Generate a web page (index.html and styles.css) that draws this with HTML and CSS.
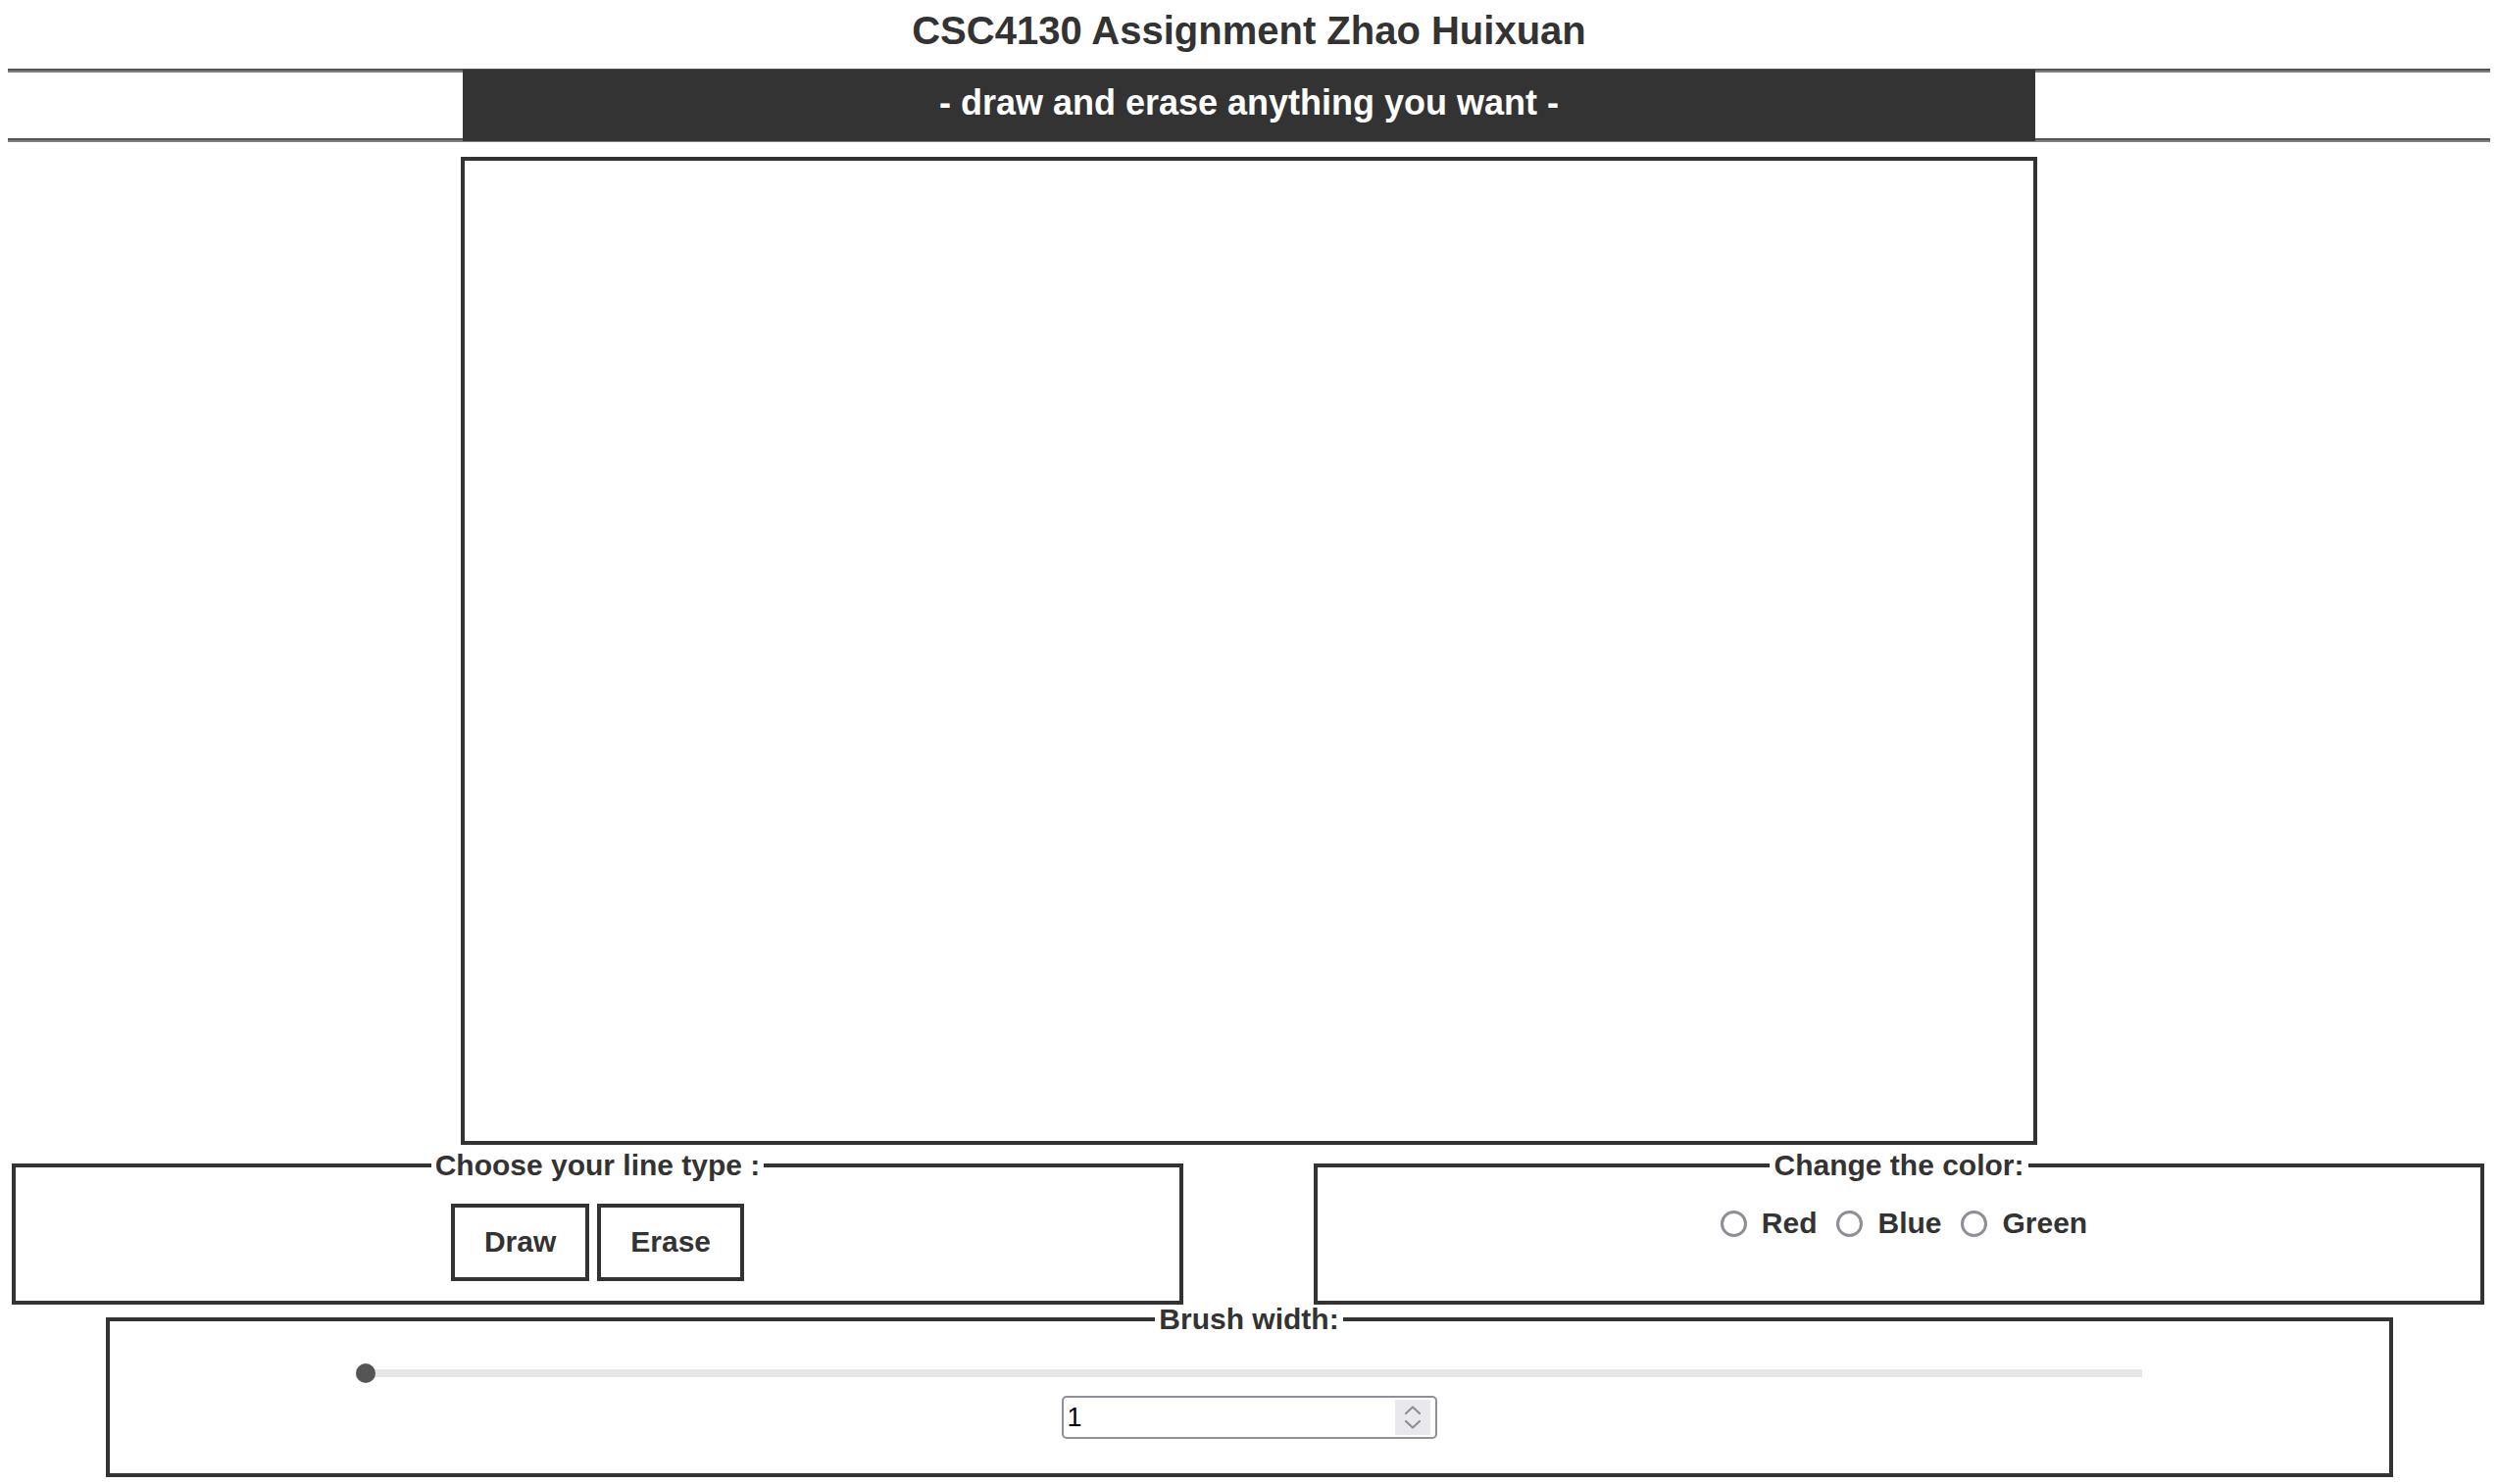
FILE: index.html
```html
<!DOCTYPE html>
<html lang="en">
<head>
<meta charset="utf-8">
<title>CSC4130 Assignment</title>
<link rel="stylesheet" href="styles.css">
</head>
<body>
<h1 class="title">CSC4130 Assignment Zhao Huixuan</h1>
<div class="band">
  <h2 class="banner">- draw and erase anything you want -</h2>
</div>
<canvas class="board" width="800" height="500"></canvas>
<div class="tools">
  <fieldset class="group group-left">
    <legend class="legend">Choose your line type :</legend>
    <div class="buttons">
      <button class="btn" type="button">Draw</button>
      <button class="btn" type="button">Erase</button>
    </div>
  </fieldset>
  <fieldset class="group group-right">
    <legend class="legend">Change the color:</legend>
    <div class="colors">
      <label class="opt"><input class="radio" type="radio" name="color" value="red">Red</label>
      <label class="opt"><input class="radio" type="radio" name="color" value="blue">Blue</label>
      <label class="opt"><input class="radio" type="radio" name="color" value="green">Green</label>
    </div>
  </fieldset>
</div>
<fieldset class="group brush">
  <legend class="legend">Brush width:</legend>
  <input class="range" type="range" min="1" max="50" value="1">
  <div class="numbox">
    <input class="num" type="text" value="1">
    <span class="spin">
      <svg width="36" height="36" viewBox="0 0 36 36" aria-hidden="true">
        <polyline points="11,14 18,7.5 25,14" fill="none" stroke="#8e8e98" stroke-width="2.2" stroke-linecap="round" stroke-linejoin="round"/>
        <polyline points="11,22 18,28.5 25,22" fill="none" stroke="#8e8e98" stroke-width="2.2" stroke-linecap="round" stroke-linejoin="round"/>
      </svg>
    </span>
  </div>
</fieldset>
</body>
</html>
```
FILE: styles.css
```css
html, body {
  background: #ffffff;
}
body {
  margin: 8px;
  font-family: "Liberation Sans", Arial, Helvetica, sans-serif;
  color: #333333;
}
.title {
  margin: 0 0 16px;
  font-size: 40px;
  line-height: 46px;
  font-weight: 700;
  text-align: center;
  color: #333333;
}
.band {
  height: 75px;
  box-sizing: border-box;
  padding: 1px 0;
  background: linear-gradient(to bottom,
    #545454 0, #545454 2px,
    #808080 2px, #808080 4px,
    transparent 4px, transparent calc(100% - 4px),
    #545454 calc(100% - 4px), #545454 calc(100% - 2px),
    #808080 calc(100% - 2px), #808080 100%);
}
.banner {
  width: 1604px;
  height: 73px;
  box-sizing: border-box;
  margin: 0 auto;
  padding-bottom: 6px;
  background: #333333;
  color: #ffffff;
  font-size: 36px;
  line-height: 67px;
  font-weight: 700;
  text-align: center;
}
.board {
  display: block;
  width: 1600px;
  height: 1000px;
  margin: 15px auto 0;
  border: 4px solid #333333;
  background: #ffffff;
}
.tools {
  display: flex;
  justify-content: space-between;
  align-items: stretch;
  margin-top: 4px;
  padding: 0 6px 0 4px;
}
.group {
  margin: 0;
  border: 4px solid #333333;
  box-sizing: border-box;
  min-inline-size: 0;
}
.legend {
  margin: 0 auto;
  padding: 0 4px;
  font-size: 30px;
  line-height: 34px;
  font-weight: 700;
  color: #333333;
}
.group-left {
  width: 1195px;
  padding: 22px 0 20px;
}
.group-right {
  width: 1194px;
  padding: 25px 0 0;
}
.buttons {
  display: flex;
  justify-content: center;
  gap: 8px;
}
.btn {
  margin: 0;
  padding: 17px 30px 19px;
  border: 4px solid #333333;
  border-radius: 0;
  background: #ffffff;
  color: #333333;
  font-family: "Liberation Sans", Arial, sans-serif;
  font-size: 30px;
  line-height: 35px;
  font-weight: 700;
}
.colors {
  display: flex;
  justify-content: center;
  align-items: center;
  gap: 10px;
  height: 34px;
}
.opt {
  display: flex;
  align-items: center;
  font-size: 30px;
  line-height: 34px;
  font-weight: 700;
  color: #333333;
}
.radio {
  -webkit-appearance: none;
  appearance: none;
  width: 27px;
  height: 27px;
  margin: 0 15px 0 10px;
  box-sizing: border-box;
  border: 3.5px solid #8f8e98;
  border-radius: 50%;
  background: #ffffff;
}
.brush {
  width: 2333px;
  margin: -2px auto 0;
  padding: 34px 0 35px;
}
.range {
  -webkit-appearance: none;
  appearance: none;
  display: block;
  width: 1822px;
  height: 8px;
  margin: 0 auto;
  padding: 0;
  background: transparent;
}
.range::-webkit-slider-runnable-track {
  height: 8px;
  background: #e6e6e6;
  border: none;
}
.range::-webkit-slider-thumb {
  -webkit-appearance: none;
  appearance: none;
  width: 20px;
  height: 20px;
  margin-top: -6px;
  border-radius: 50%;
  background: #555555;
  border: none;
}
.numbox {
  display: flex;
  align-items: center;
  width: 383px;
  height: 44px;
  margin: 19px auto 0;
  box-sizing: border-box;
  padding: 2px 5px 2px 4px;
  border: 2px solid #8f8e9b;
  border-radius: 5px;
  background: #ffffff;
}
.num {
  flex: 1;
  min-width: 0;
  margin: 0;
  padding: 0;
  border: none;
  outline: none;
  background: transparent;
  font-family: "Liberation Sans", Arial, sans-serif;
  font-size: 27px;
  line-height: 36px;
  color: #000000;
}
.spin {
  display: block;
  width: 36px;
  height: 36px;
  background: #e9e9ed;
}
.spin svg {
  display: block;
}
```
